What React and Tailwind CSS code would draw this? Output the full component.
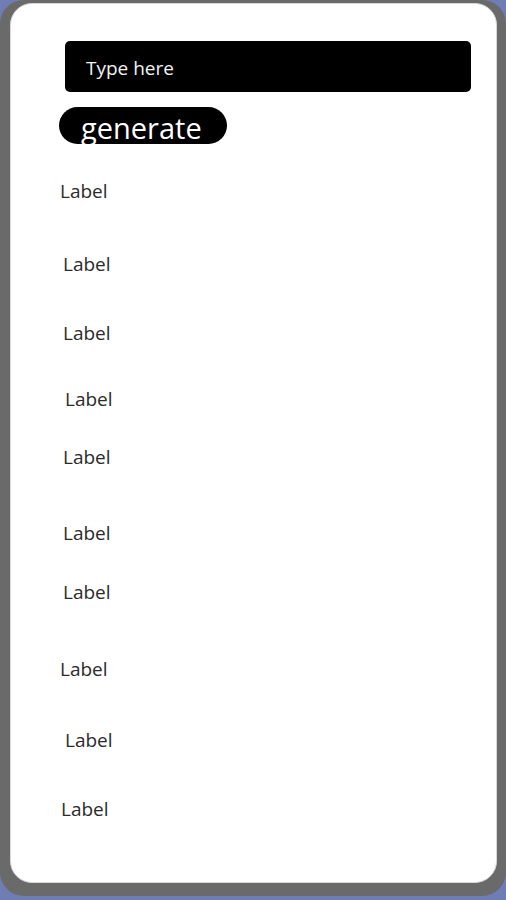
import { useState } from 'react';

// spacing in the mock is uneven, so each label keeps its own offsets
const labels = [
  { id: 1, cls: 'mt-[34px] ml-[49px]' },
  { id: 2, cls: 'mt-[47px] ml-[52px]' },
  { id: 3, cls: 'mt-[43px] ml-[52px]' },
  { id: 4, cls: 'mt-[40px] ml-[54px]' },
  { id: 5, cls: 'mt-[32px] ml-[52px]' },
  { id: 6, cls: 'mt-[50px] ml-[52px]' },
  { id: 7, cls: 'mt-[33px] ml-[52px]' },
  { id: 8, cls: 'mt-[51px] ml-[49px]' },
  { id: 9, cls: 'mt-[45px] ml-[54px]' },
  { id: 10, cls: 'mt-[43px] ml-[50px]' },
];

const App = () => {
  const [text, setText] = useState('');

  return (
    <div
      className="min-h-[900px] w-[506px] bg-[#6f7db5]"
      style={{ fontFamily: '"Open Sans", "Noto Sans", sans-serif' }}
    >
      {/* device frame */}
      <div className="w-[506px] h-[896px] bg-[#6a6a6a] rounded-[24px] pt-[4px] pl-[11px] pr-[10px] pb-[12px]">
        <div className="h-full bg-white rounded-[22px] border border-[#d8d8d8] -m-px flex flex-col items-start pt-[37px]">
          <input
            value={text}
            onChange={(e) => setText(e.target.value)}
            placeholder="Type here"
            className="ml-[54px] w-[406px] h-[51px] bg-black rounded-[5px] pl-[21px] pt-[2px] text-[19px] text-white placeholder:text-[#f2f2f2] outline-none"
          />

          <button className="mt-[15px] ml-[48px] w-[168px] h-[37px] bg-black rounded-full pl-[22px] pt-[2px] text-left text-[29px] leading-[37px] text-white">
            generate
          </button>

          {labels.map((l) => (
            <div key={l.id} className={`${l.cls} text-[19px] leading-[26px] text-[#2b2b2b]`}>
              Label
            </div>
          ))}
        </div>
      </div>
    </div>
  );
};

export default App;
